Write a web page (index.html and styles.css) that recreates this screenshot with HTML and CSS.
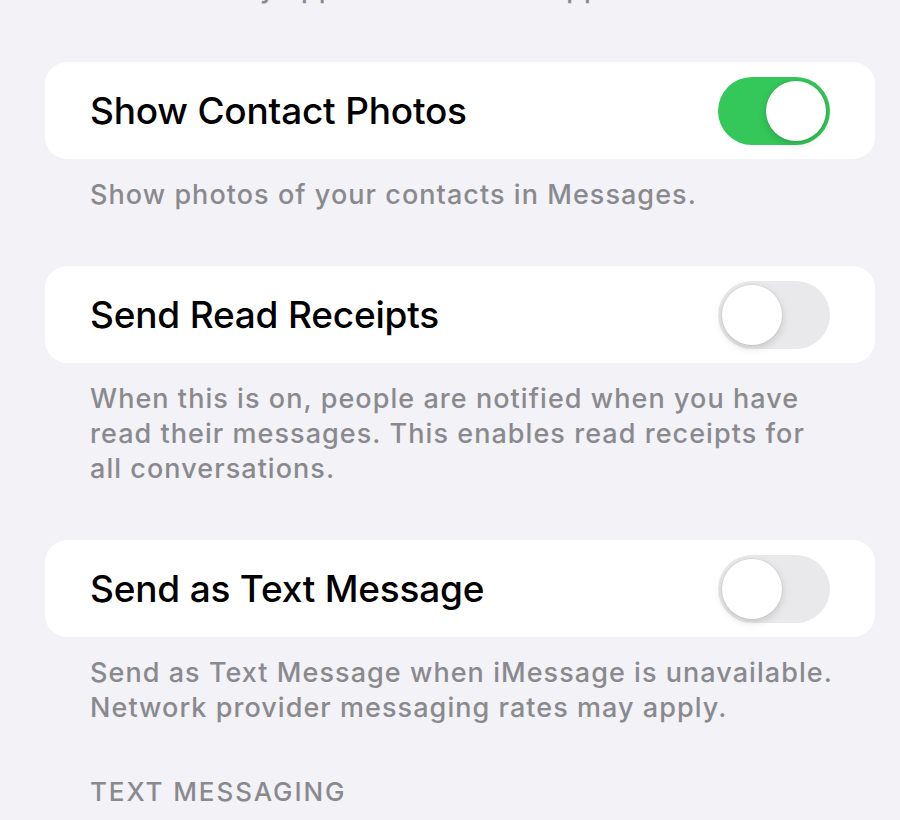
FILE: index.html
```html
<!DOCTYPE html>
<html>
<head>
    <meta charset="utf-8">
    <meta name="viewport" content="width=device-width, initial-scale=1.0">
    <title>Messages</title>
    <link rel="stylesheet" href="styles.css">
</head>
<body>
<div class="settings">

    <p class="group-footer group-footer-top">Contacts, photos and links shared with you will<br>automatically appear in selected apps.</p>

    <div class="group group-first">
        <div class="cell">
            <span class="cell-title">Show Contact Photos</span>
            <span class="switch switch-on"><span class="switch-knob"></span></span>
        </div>
        <p class="group-footer">Show photos of your contacts in Messages.</p>
    </div>

    <div class="group">
        <div class="cell">
            <span class="cell-title">Send Read Receipts</span>
            <span class="switch"><span class="switch-knob"></span></span>
        </div>
        <p class="group-footer">When this is on, people are notified when you have read their messages. This enables read receipts for all conversations.</p>
    </div>

    <div class="group">
        <div class="cell">
            <span class="cell-title">Send as Text Message</span>
            <span class="switch"><span class="switch-knob"></span></span>
        </div>
        <p class="group-footer">Send as Text Message when iMessage is unavailable. Network provider messaging rates may apply.</p>
    </div>

    <h2 class="group-header">TEXT MESSAGING</h2>

</div>
</body>
</html>
```

FILE: styles.css
```css
* {
    box-sizing: border-box;
    font-family: Inter, "Noto Sans", sans-serif;
}

body {
    margin: 0;
    background: #f2f2f7;
    overflow: hidden;
}

.settings {
    margin: 0 25px 0 45px;
}

.group {
    margin-top: 54px;
}

.group-first {
    margin-top: 56px;
}

.cell {
    display: flex;
    align-items: center;
    justify-content: space-between;
    height: 97px;
    padding: 0 45px 0 45px;
    background: #fff;
    border-radius: 22px;
}

.cell-title {
    font-size: 37px;
    font-weight: 500;
    color: #000;
    letter-spacing: -0.2px;
}

.group-footer {
    margin: 0;
    padding: 18px 40px 0 45px;
    font-size: 27px;
    font-weight: 500;
    line-height: 35px;
    color: #8a8a8e;
    letter-spacing: 1.05px;
}

.group-footer-top {
    margin-top: -64px;
    padding-top: 0;
}

.group-header {
    margin: 49px 0 0;
    padding-left: 45px;
    font-size: 26px;
    font-weight: 500;
    line-height: 35px;
    color: #8a8a8e;
    letter-spacing: 1.9px;
}

/* toggle switch */
.switch {
    display: flex;
    align-items: center;
    justify-content: flex-start;
    width: 112px;
    height: 68px;
    padding: 4px;
    border-radius: 34px;
    background: #e9e9eb;
}

.switch-on {
    justify-content: flex-end;
    background: #34c759;
}

.switch-knob {
    width: 60px;
    height: 60px;
    border-radius: 50%;
    background: #fff;
    box-shadow: 0 3px 8px rgba(0, 0, 0, 0.15), 0 0 0 1px rgba(0, 0, 0, 0.04);
}
```
